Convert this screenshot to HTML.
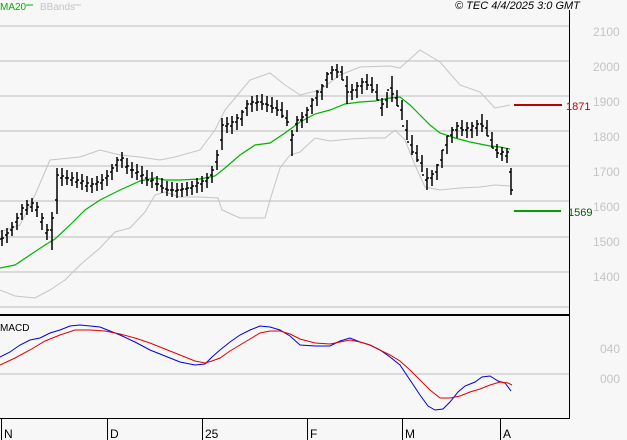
<!DOCTYPE html>
<html><head><meta charset="utf-8"><style>
html,body{margin:0;padding:0;background:#f7f7f7;width:627px;height:440px;overflow:hidden}
svg{display:block}
text{font-family:"Liberation Sans",sans-serif}
</style></head><body>
<svg width="627" height="440" xmlns="http://www.w3.org/2000/svg">
<rect width="627" height="440" fill="#f7f7f7"/>
<g stroke="#c8c8c8" stroke-width="1.2">
<line x1="0" y1="26" x2="569" y2="26"/><line x1="0" y1="61" x2="569" y2="61"/>
<line x1="0" y1="96" x2="569" y2="96"/><line x1="0" y1="131" x2="569" y2="131"/>
<line x1="0" y1="166" x2="569" y2="166"/><line x1="0" y1="201" x2="569" y2="201"/>
<line x1="0" y1="237" x2="569" y2="237"/><line x1="0" y1="272" x2="569" y2="272"/>
<line x1="0" y1="307" x2="569" y2="307"/><line x1="0" y1="374" x2="569" y2="374"/>
</g>
<line x1="569.5" y1="10" x2="569.5" y2="419" stroke="#000"/>
<line x1="0" y1="315" x2="569" y2="315" stroke="#000" stroke-width="2"/>
<line x1="0" y1="418.5" x2="569" y2="418.5" stroke="#000"/>
<g stroke="#000"><line x1="1.5" y1="418" x2="1.5" y2="440"/><line x1="107.5" y1="418" x2="107.5" y2="440"/><line x1="202.5" y1="418" x2="202.5" y2="440"/><line x1="307.5" y1="418" x2="307.5" y2="440"/><line x1="402.5" y1="418" x2="402.5" y2="440"/><line x1="500.5" y1="418" x2="500.5" y2="440"/></g>
<g font-size="12" fill="#000"><text x="4" y="438">N</text><text x="110" y="438">D</text><text x="205" y="438">25</text><text x="310" y="438">F</text><text x="405" y="438">M</text><text x="503" y="438">A</text></g>
<g font-size="12" fill="#c4c4c4"><text x="593" y="36">2100</text><text x="593" y="71">2000</text><text x="593" y="106">1900</text><text x="593" y="141">1800</text><text x="593" y="176">1700</text><text x="593" y="211">1600</text><text x="593" y="246">1500</text><text x="593" y="281">1400</text><text x="600" y="353">040</text><text x="600" y="383">000</text></g>
<text x="0" y="10" font-size="10" fill="#00b000">MA20</text><line x1="26" y1="5" x2="33" y2="5" stroke="#00b000"/>
<text x="40" y="10" font-size="10" fill="#c4c4c4">BBands</text><line x1="73" y1="5" x2="81" y2="5" stroke="#c4c4c4"/>
<text x="455" y="9" font-size="11" font-style="italic" fill="#000">© TEC 4/4/2025 3:0 GMT</text>
<text x="0" y="331" font-size="10" fill="#000">MACD</text>
<polyline fill="none" stroke="#c4c4c4" points="0,232 20,225 35,195 50,160 80,157 100,150 120,155 140,157 160,160 175,157 200,150 215,130 225,110 250,80 270,73 285,85 300,95 320,90 340,75 360,67 390,66 400,68 420,50 440,62 460,85 480,92 495,108 510,105"/>
<polyline fill="none" stroke="#c4c4c4" points="0,290 15,296 35,298 50,290 65,280 80,265 100,248 115,232 130,228 145,212 155,195 165,192 180,197 200,197 218,198 222,210 240,218 265,218 270,200 280,168 290,155 300,152 315,138 330,141 350,139 370,138 385,138 395,130 405,140 415,165 425,187 440,190 460,188 480,187 495,185 510,186"/>
<polyline fill="none" stroke="#00b400" stroke-width="1.2" points="0,268 15,265 30,255 45,245 55,239 70,225 85,210 100,200 120,190 140,181 155,178 165,180 180,180 200,179 215,176 225,168 240,155 255,145 270,143 285,133 300,122 315,114 330,110 345,104 360,102 375,101 390,98 400,97 410,105 420,115 430,125 440,133 455,138 470,142 490,146 500,147 510,149"/>
<path fill="none" stroke="#000" stroke-width="1.5" d="M2,230V246M7,228V243M12,222V236M17,213V230M22,204V220M27,200V215M32,198V212M37,202V217M42,213V230M47,224V240M52,212V250M57,168V214M62,168V186M67,170V185M72,172V186M77,172V188M82,174V190M87,176V192M92,178V193M97,176V191M102,174V190M107,170V186M112,164V180M117,157V172M122,152V168M127,158V174M132,162V178M137,164V180M142,166V184M147,170V186M152,172V188M157,176V191M162,178V193M167,181V196M172,182V197M177,183V198M182,183V197M187,182V196M192,181V195M197,178V193M202,176V192M207,173V188M212,166V183M217,150V170M222,118V150M227,117V133M232,116V134M237,114V130M242,110V126M247,100V116M252,96V112M257,95V111M262,94V110M267,96V112M272,97V113M277,100V116M282,102V118M287,110V126M292,130V156M297,116V132M302,112V128M307,107V123M312,98V114M317,90V106M322,84V100M327,72V88M332,66V80M337,64V78M342,66V80M347,76V104M352,84V100M357,82V98M362,78V94M367,74V90M372,77V93M377,84V100M382,98V116M387,92V108M392,76V102M397,90V106M402,100V120M407,120V140M412,135V155M417,145V162M422,155V172M427,168V190M432,170V186M437,164V180M442,150V168M447,136V154M452,127V143M457,122V138M462,120V136M467,122V138M472,122V138M477,120V136M482,114V132M487,120V136M492,132V148M497,144V158M502,147V161M507,148V163M511,168V195M0,239H2M2,238H4M5,235H7M7,233H9M10,230H12M12,227H14M15,222H17M17,218H19M20,214H22M22,208H24M25,210H27M27,205H29M30,207H32M32,203H34M35,210H37M37,207H39M40,222H42M42,218H44M45,233H47M47,230H49M50,230H52M52,218H54M55,200H57M57,175H59M60,178H62M62,176H64M65,178H67M67,178H69M70,180H72M72,178H74M75,182H77M77,180H79M80,183H82M82,181H84M85,186H87M87,183H89M90,186H92M92,184H94M95,184H97M97,182H99M100,183H102M102,180H104M105,178H107M107,176H109M110,172H112M112,168H114M115,165H117M117,160H119M120,160H122M122,158H124M125,167H127M127,166H129M130,170H132M132,170H134M135,173H137M137,172H139M140,176H142M142,175H144M145,178H147M147,180H149M150,181H152M152,180H154M155,184H157M157,184H159M160,186H162M162,188H164M165,189H167M167,190H169M170,190H172M172,190H174M175,191H177M177,190H179M180,190H182M182,189H184M185,189H187M187,188H189M190,188H192M192,186H194M195,186H197M197,183H199M200,184H202M202,181H204M205,181H207M207,178H209M210,175H212M212,170H214M215,162H217M217,155H219M220,140H222M222,125H224M225,126H227M227,124H229M230,126H232M232,122H234M235,122H237M237,118H239M240,119H242M242,112H244M245,108H247M247,104H249M250,104H252M252,102H254M255,103H257M257,102H259M260,102H262M262,104H264M265,104H267M267,105H269M270,106H272M272,108H274M275,108H277M277,110H279M280,110H282M282,116H284M285,118H287M287,122H289M290,140H292M292,135H294M295,124H297M297,120H299M300,120H302M302,117H304M305,115H307M307,110H309M310,106H312M312,100H314M315,98H317M317,92H319M320,92H322M322,86H324M325,80H327M327,74H329M330,73H332M332,70H334M335,70H337M337,72H339M340,72H342M342,80H344M345,86H347M347,92H349M350,92H352M352,90H354M355,90H357M357,86H359M360,86H362M362,82H364M365,82H367M367,85H369M370,85H372M372,90H374M375,92H377M377,100H379M380,108H382M382,104H384M385,100H387M387,90H389M390,88H392M392,94H394M395,98H397M397,106H399M400,110H402M402,126H404M405,130H407M407,142H409M410,145H412M412,152H414M415,153H417M417,160H419M420,163H422M422,175H424M425,180H427M427,178H429M430,178H432M432,174H434M435,172H437M437,165H439M440,160H442M442,150H444M445,145H447M447,136H449M450,135H452M452,130H454M455,130H457M457,126H459M460,128H462M462,130H464M465,130H467M467,128H469M470,130H472M472,126H474M475,128H477M477,124H479M480,124H482M482,126H484M485,128H487M487,136H489M490,140H492M492,148H494M495,150H497M497,153H499M500,154H502M502,152H504M505,156H507M507,152H509M509,172H511M511,190H513"/>
<line x1="514" y1="105" x2="562" y2="105" stroke="#c00000" stroke-width="2"/>
<text x="566" y="110" font-size="11" fill="#c00000">1871</text>
<line x1="514" y1="211" x2="561" y2="211" stroke="#00a000" stroke-width="2"/>
<text x="568" y="216" font-size="11" fill="#006000">1569</text>
<polyline fill="none" stroke="#0000e0" points="0,357 10,352 20,345 30,340 40,338 50,333 60,330 70,326 80,325 90,326 100,327 110,331 120,335 135,342 150,350 165,356 180,362 195,365 205,364 212,357 220,350 230,342 240,335 250,330 260,326 270,327 280,330 290,336 300,345 315,346 330,346 340,341 350,338 360,342 370,345 380,350 390,357 400,365 410,380 420,395 428,406 435,410 443,409 450,402 458,392 465,386 475,382 482,377 490,376 498,381 505,383 511,391"/>
<polyline fill="none" stroke="#e00000" points="0,365 15,358 30,350 45,341 60,335 75,330 90,330 105,331 120,334 135,338 150,343 165,349 180,355 195,361 205,363 212,361 220,358 230,351 240,345 250,339 260,333 270,331 280,331 290,334 300,339 315,343 330,344 340,342 350,340 360,342 370,345 380,350 390,355 400,361 410,370 420,380 430,390 440,398 450,398 460,396 470,392 480,389 490,385 500,382 508,383 512,385"/>
</svg>
</body></html>
